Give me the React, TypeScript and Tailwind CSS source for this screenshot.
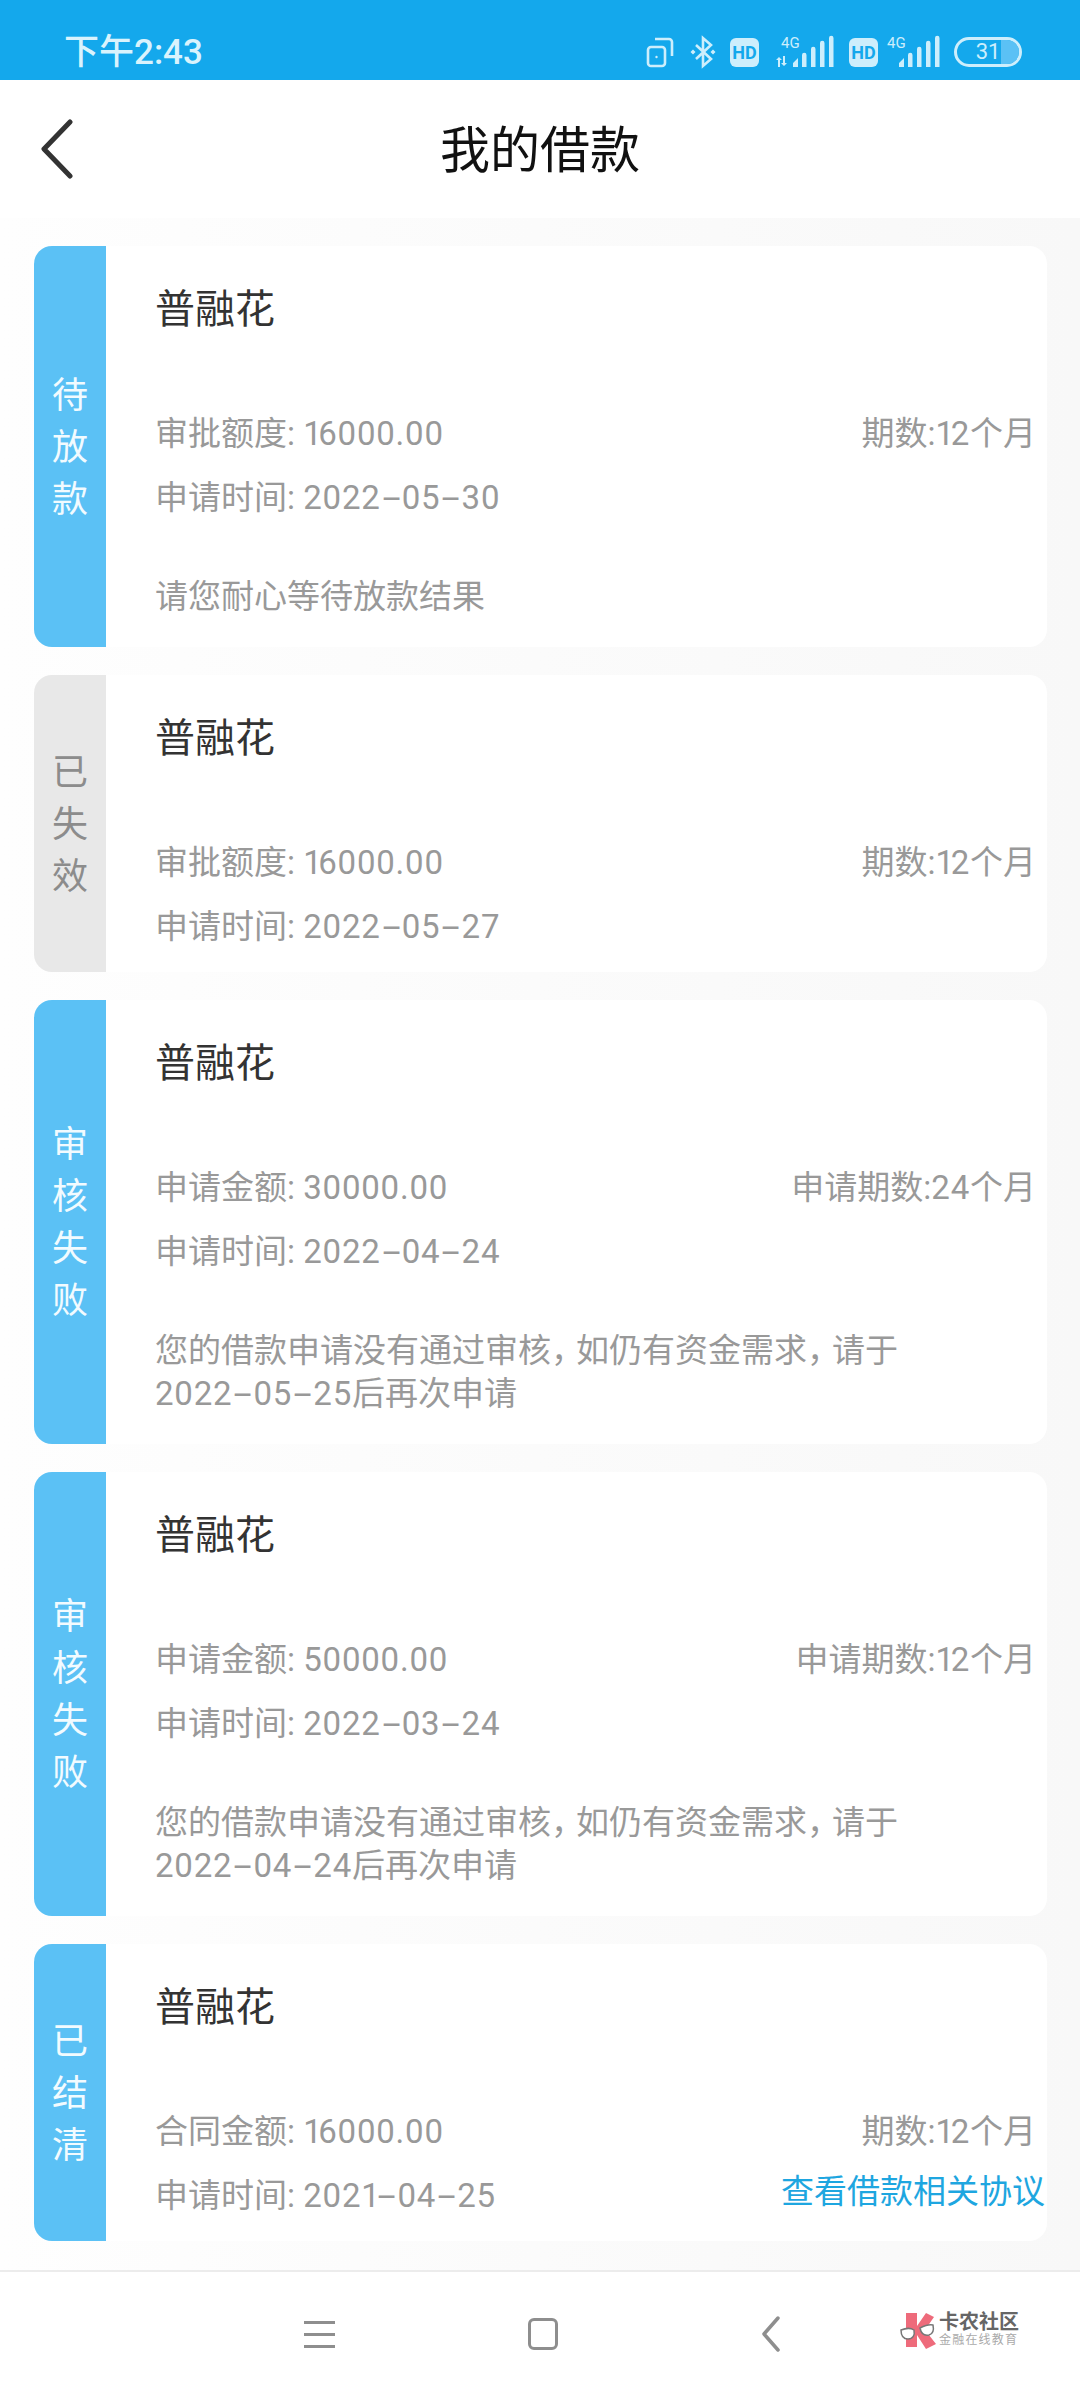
const font = { fontFamily: '"Roboto", "Noto Sans CJK SC", sans-serif' };

type Loan = {
  status: string;
  gray?: boolean;
  amountLabel: string;
  amount: string;
  termLabel: string;
  date: string;
  note?: string[];
  link?: boolean;
};

const loans: Loan[] = [
  { status: "待放款", amountLabel: "审批额度", amount: "16000.00", termLabel: "期数:12个月", date: "2022-05-30", note: ["请您耐心等待放款结果"] },
  { status: "已失效", gray: true, amountLabel: "审批额度", amount: "16000.00", termLabel: "期数:12个月", date: "2022-05-27" },
  { status: "审核失败", amountLabel: "申请金额", amount: "30000.00", termLabel: "申请期数:24个月", date: "2022-04-24", note: ["您的借款申请没有通过审核，如仍有资金需求，请于", "2022-05-25后再次申请"] },
  { status: "审核失败", amountLabel: "申请金额", amount: "50000.00", termLabel: "申请期数:12个月", date: "2022-03-24", note: ["您的借款申请没有通过审核，如仍有资金需求，请于", "2022-04-24后再次申请"] },
  { status: "已结清", amountLabel: "合同金额", amount: "16000.00", termLabel: "期数:12个月", date: "2021-04-25", link: true },
];

// the original font has wide hyphens, a narrow 1 and tight commas
const Spaced = ({ text }: { text: string }) => (
  <>
    {text.split(/(-|，|1|[02-9.]+)/).map((part, i) => {
      if (part === "-") {
        return (
          <span key={i} className="inline-block mx-[6px] scale-x-[2]">
            -
          </span>
        );
      }
      if (part === "，") {
        return (
          <span key={i} className="tracking-[-8px]">
            ，
          </span>
        );
      }
      if (part === "1") {
        return (
          <span key={i} className="tracking-[-3.500px]">
            1
          </span>
        );
      }
      if (/^[02-9.]+$/.test(part)) {
        return (
          <span key={i} className="tracking-[0.800px]">
            {part}
          </span>
        );
      }
      return <span key={i}>{part}</span>;
    })}
  </>
);

const StatusIcons = () => (
  <div className="flex items-center text-[#cdeefc]">
    {/* rotation lock */}
    <svg width="30" height="32" viewBox="0 0 30 32" fill="none" stroke="currentColor" strokeWidth="2.6">
      <rect x="2" y="11" width="17" height="19" rx="3" />
      <path d="M9 3h14a3 3 0 0 1 3 3v14" />
      <circle cx="10.5" cy="21" r="1.2" fill="currentColor" stroke="none" />
    </svg>
    {/* bluetooth */}
    <svg className="ml-[12px]" width="30" height="34" viewBox="0 0 30 34" fill="none" stroke="currentColor" strokeWidth="2.6">
      <path d="M8 10l15 14-8 7V3l8 7L8 24" />
      <path d="M2.5 17l2.5-2.5L7.500 17 5 19.500zM22.500 17l2.500-2.500 2.500 2.500-2.500 2.500z" fill="currentColor" stroke="none" />
    </svg>
    <div className="ml-[12px] w-[29px] h-[29px] rounded-[6px] bg-[#cdeefc] flex items-center justify-center text-[#14a8ec] text-[18px] font-bold">HD</div>
    {/* sim 1 */}
    <svg className="ml-[17px] overflow-visible" width="58" height="32" viewBox="0 0 58 32" fill="currentColor">
      <text x="5" y="12" fontSize="15" fontFamily="Roboto, sans-serif">4G</text>
      <path d="M2 22h2v9H2zM0 24l3-3 3 3zM7 20h2v9H7zM5 27h6l-3 3z" />
      <path d="M17 31v-4l5-5v9zM26 31V19a2 2 0 0 1 4.500 0v12zM35 31V13a2 2 0 0 1 4.500 0v18zM44 31V7a2 2 0 0 1 4.500 0v24zM53 31V2a2 2 0 0 1 4.500 0v29z" />
    </svg>
    <div className="ml-[15px] w-[29px] h-[29px] rounded-[6px] bg-[#cdeefc] flex items-center justify-center text-[#14a8ec] text-[18px] font-bold">HD</div>
    {/* sim 2 */}
    <svg className="ml-[12px] overflow-visible" width="54" height="32" viewBox="0 0 54 32" fill="currentColor">
      <text x="-3" y="12" fontSize="15" fontFamily="Roboto, sans-serif">4G</text>
      <path d="M9 31v-4l5-5v9zM18 31V19a2 2 0 0 1 4.500 0v12zM27 31V13a2 2 0 0 1 4.500 0v18zM36 31V7a2 2 0 0 1 4.500 0v24zM45 31V2a2 2 0 0 1 4.500 0v29z" />
    </svg>
    {/* battery */}
    <div className="ml-[10px] relative w-[68px] h-[30px] rounded-full border-[3px] border-[#cdeefc] overflow-hidden flex items-center justify-center">
      <div className="absolute right-0 top-0 bottom-0 w-[18px] bg-[#5bc1f5]" />
      <span className="relative text-[22px] leading-none text-[#cdeefc]">31</span>
    </div>
  </div>
);

const LoanCard = ({ loan }: { loan: Loan }) => (
  <div className="flex rounded-[18px] bg-white overflow-hidden">
    <div
      className={
        loan.gray
          ? "w-[72px] shrink-0 flex flex-col items-center justify-center pt-[2px] bg-[#e8e8e8] text-[#8c8c8c] text-[36px] leading-[52px]"
          : "w-[72px] shrink-0 flex flex-col items-center justify-center pt-[2px] bg-[#5bc1f5] text-[#f2fbff] text-[36px] leading-[52px]"
      }
    >
      {loan.status.split("").map((c, i) => (
        <span key={i}>{c}</span>
      ))}
    </div>
    <div className="flex-1 min-w-0 pl-[49px] pr-[11px] pt-[36px] pb-[13px]">
      <div className="text-[40px] leading-[56px] text-[#333333]">普融花</div>
      <div className="mt-[64px] flex justify-between text-[33px] leading-[64px] text-[#999999]">
        <span>
          {loan.amountLabel}: <Spaced text={loan.amount} />
        </span>
        <span>
          <Spaced text={loan.termLabel} />
        </span>
      </div>
      <div className="flex justify-between items-center text-[33px] leading-[64px] text-[#999999]">
        <span>
          申请时间: <Spaced text={loan.date} />
        </span>
        {loan.link && <span className="-mr-[9px] -mt-[8px] text-[33px] text-[#1ea6e0]">查看借款相关协议</span>}
      </div>
      {loan.note && (
        <div className="mt-[45px] pb-[16px] text-[33px] leading-[43px] text-[#999999]">
          {loan.note.map((line) => (
            <div key={line}>
              <Spaced text={line} />
            </div>
          ))}
        </div>
      )}
    </div>
  </div>
);

const NavBar = () => (
  <div className="relative h-[130px] shrink-0 border-t-2 border-[#ececec] bg-white flex items-center pb-[4px]">
    <div className="ml-[304px] flex flex-col gap-[9px] w-[31px]">
      <div className="h-[3px] bg-[#8e8e8e]" />
      <div className="h-[3px] bg-[#8e8e8e]" />
      <div className="h-[3px] bg-[#8e8e8e]" />
    </div>
    <div className="ml-[193px] w-[30px] h-[32px] rounded-[6px] border-[3px] border-[#8e8e8e]" />
    <svg className="ml-[202px]" width="22" height="36" viewBox="0 0 22 36" fill="none" stroke="#8e8e8e" strokeWidth="3.500" strokeLinecap="round" strokeLinejoin="round">
      <path d="M18 2L4 18l14 16" />
    </svg>
    <div className="ml-[118px] flex items-center -mt-[8px]">
      <svg width="38" height="38" viewBox="0 0 38 38">
        <path d="M6 2h11v13l9-13 8 4-9 13 11 14-10 5-9-14v12H6z" fill="#ee6b7b" />
        <path d="M1 19c5-2 10-2 13 0 1 5-1 9-6 9s-7-4-7-9zM20 17c4-2 9-4 13-3 1 5 0 9-4 10-5 1-8-2-9-7z" fill="#ffffff" stroke="#777777" strokeWidth="1.500" />
      </svg>
      <div className="ml-[1px] flex flex-col">
        <span className="text-[20px] leading-[21px] font-bold text-[#666666]">卡农社区</span>
        <span className="text-[12px] leading-[15px] text-[#aaaaaa] tracking-[1.200px]">金融在线教育</span>
      </div>
    </div>
  </div>
);

export default function App() {
  return (
    <div className="w-[1080px] h-[2400px] flex flex-col overflow-hidden bg-white" style={font}>
      {/* status bar */}
      <div className="h-[80px] shrink-0 bg-[#14a8ec] flex items-center justify-between pl-[64px] pr-[58px] pt-[24px]">
        <span className="text-[35px] font-medium text-[#d9f3fd] leading-none">下午2:43</span>
        <StatusIcons />
      </div>

      {/* title bar */}
      <div className="relative h-[138px] shrink-0 bg-white flex items-center justify-center pt-[3px]">
        <svg className="absolute left-[38px] top-[39px]" width="36" height="60" viewBox="0 0 36 60" fill="none" stroke="#333333" strokeWidth="5" strokeLinecap="round" strokeLinejoin="round">
          <path d="M32 3L6 30l26 27" />
        </svg>
        <span className="text-[50px] leading-none text-[#111111]">我的借款</span>
      </div>

      {/* loan list */}
      <div className="flex-1 min-h-0 flex flex-col gap-[28px] pt-[28px] pl-[34px] pr-[33px] bg-gradient-to-r from-[#fefefe] to-[#f8f8f8]">
        {loans.map((loan, i) => (
          <LoanCard key={i} loan={loan} />
        ))}
      </div>

      <NavBar />
    </div>
  );
}
